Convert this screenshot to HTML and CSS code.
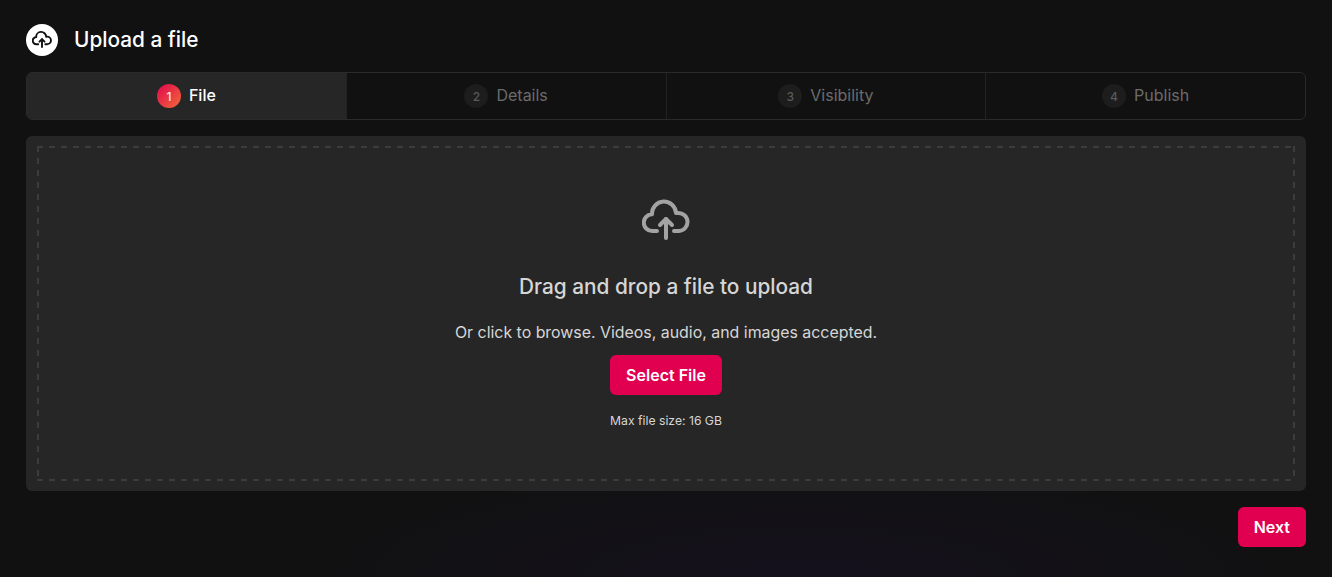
FILE: index.html
```html
<!DOCTYPE html>
<html lang="en">
<head>
    <meta charset="UTF-8">
    <meta name="viewport" content="width=device-width, initial-scale=1.0">
    <title>Upload a file</title>
    <link rel="stylesheet" href="styles.css">
</head>
<body>

    <header class="page-header">
        <span class="header-icon">
            <svg width="20" height="20" viewBox="0 0 24 24" fill="none" stroke="currentColor" stroke-width="2.3" stroke-linecap="round" stroke-linejoin="round">
                <path d="M7.5 17H5.2a4.2 4.2 0 0 1-.2-8.4A5.9 5.9 0 0 1 17 8h1a4.5 4.5 0 0 1 .5 9H16"/>
                <path d="M9 14l3-3l3 3"/>
                <path d="M12 11v9.5"/>
            </svg>
        </span>
        <h1>Upload a file</h1>
    </header>

    <nav class="steps">
        <div class="step active"><span class="step-num">1</span><span class="step-label">File</span></div>
        <div class="step"><span class="step-num">2</span><span class="step-label">Details</span></div>
        <div class="step"><span class="step-num">3</span><span class="step-label">Visibility</span></div>
        <div class="step"><span class="step-num">4</span><span class="step-label">Publish</span></div>
    </nav>

    <main class="dropzone">
        <div class="dropzone-inner">
            <svg class="drop-icon" width="48" height="48" viewBox="0 0 24 24" fill="none" stroke="currentColor" stroke-width="2" stroke-linecap="round" stroke-linejoin="round">
                <path d="M7.5 17H5.2a4.2 4.2 0 0 1-.2-8.4A5.9 5.9 0 0 1 17 8h1a4.5 4.5 0 0 1 .5 9H16"/>
                <path d="M9 14l3-3l3 3"/>
                <path d="M12 11v9.5"/>
            </svg>
            <h2>Drag and drop a file to upload</h2>
            <p>Or click to browse. Videos, audio, and images accepted.</p>
            <button class="btn">Select File</button>
            <small>Max file size: 16 GB</small>
        </div>
    </main>

    <footer class="actions">
        <button class="btn">Next</button>
    </footer>

</body>
</html>
```

FILE: styles.css
```css
* {
    box-sizing: border-box;
}

html {
    height: 100%;
}

body {
    font-family: Inter, "Noto Sans", sans-serif;
    margin: 0;
    padding: 24px 26px 30px;
    min-height: 100%;
    overflow: hidden;
    color: #ffffff;
    background-color: #111112;
    background-image: radial-gradient(ellipse 480px 110px at 800px 577px, #15111d, rgba(17, 17, 18, 0));
}

.page-header {
    display: flex;
    align-items: center;
    gap: 16px;
    height: 32px;
}

.page-header h1 {
    margin: 0 0 2px;
    font-size: 20.8px;
    font-weight: 500;
}

.header-icon {
    display: flex;
    align-items: center;
    justify-content: center;
    width: 32px;
    height: 32px;
    border-radius: 50%;
    background-color: #ffffff;
    color: #111112;
}

.steps {
    display: flex;
    height: 48px;
    margin-top: 16px;
    border: 1px solid #2a2a2a;
    border-radius: 6px;
    overflow: hidden;
}

.step {
    flex: 1;
    display: flex;
    align-items: center;
    justify-content: center;
    gap: 8px;
    font-size: 16px;
    font-weight: 400;
    color: #6b6b6b;
    border-left: 1px solid #222222;
}

.step:first-child {
    border-left: none;
}

.step.active {
    background-color: #262626;
    color: #ffffff;
    font-weight: 500;
}

.step-label {
    padding-bottom: 2px;
}

.step-num {
    display: flex;
    align-items: center;
    justify-content: center;
    width: 24px;
    height: 24px;
    border-radius: 50%;
    background-color: #1d1d1d;
    color: #5a5a5a;
    font-size: 12px;
    font-weight: 500;
}

.step.active .step-num {
    background-image: linear-gradient(135deg, #e0044f, #f46a38);
    color: #ffe6e6;
}

.dropzone {
    height: 355px;
    margin-top: 16px;
    padding: 10px 11px;
    background-color: #262626;
    border-radius: 6px;
}

.dropzone-inner {
    display: flex;
    flex-direction: column;
    align-items: center;
    height: 100%;
    padding-top: 51px;
    color: #d6d6d6;
    background-image:
        linear-gradient(to right, #3c3c3c 6px, transparent 6px),
        linear-gradient(to right, #3c3c3c 6px, transparent 6px),
        linear-gradient(to bottom, #3c3c3c 6px, transparent 6px),
        linear-gradient(to bottom, #3c3c3c 6px, transparent 6px);
    background-size: 12px 2px, 12px 2px, 2px 12px, 2px 12px;
    background-position: 0 0, 0 100%, 0 0, 100% 0;
    background-repeat: repeat-x, repeat-x, repeat-y, repeat-y;
}

.drop-icon {
    color: #a3a3a3;
}

.dropzone-inner h2 {
    margin: 28px 0 0;
    font-size: 20.8px;
    line-height: 28px;
    font-weight: 500;
}

.dropzone-inner p {
    margin: 20px 0 0;
    font-size: 15.9px;
    line-height: 24px;
}

.dropzone-inner small {
    margin-top: 18px;
    font-size: 12.2px;
    line-height: 16px;
}

.btn {
    height: 40px;
    margin-top: 10px;
    padding: 0 16px;
    border: none;
    border-radius: 6px;
    background-color: #e0004f;
    color: #ffffff;
    font-family: inherit;
    font-size: 16px;
    font-weight: 600;
    cursor: pointer;
}

.actions {
    display: flex;
    justify-content: flex-end;
    margin-top: 16px;
}

.actions .btn {
    margin-top: 0;
}
```
